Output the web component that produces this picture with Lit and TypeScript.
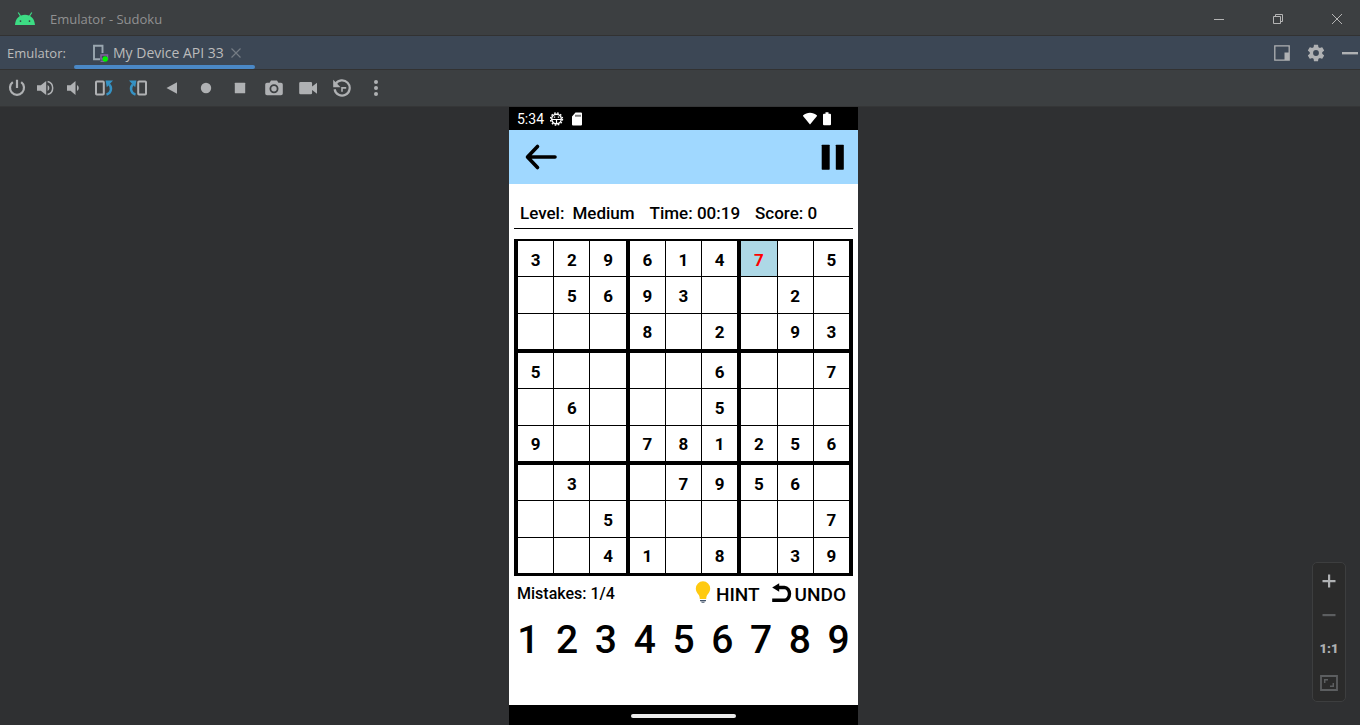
import { LitElement, html, css, svg } from "lit";
import { customElement, state } from "lit/decorators.js";

const BOARD = [
  "329614705",
  "056930020",
  "000802093",
  "500006007",
  "060005000",
  "900781256",
  "030079560",
  "005000007",
  "004108039",
];

const power = svg`<path d="M9 .8V9M4.800 3.200A7 7 0 1 0 13.200 3.200" fill="none" stroke="currentColor" stroke-width="2.200"/>`;
const volumeUp = svg`<path d="M1 6.300h3.800L10.200 2v14l-5.400-4.300H1z"/><path d="M11.600 6a3.400 3.400 0 0 1 0 6z"/><path d="M11.600 2.500a6.700 6.700 0 0 1 0 13" fill="none" stroke="currentColor" stroke-width="1.500"/>`;
const volumeDown = svg`<path d="M3 6.300h3.500L11.500 2v14l-5-4.300H3z"/><path d="M13 6a3.400 3.400 0 0 1 0 6z"/>`;
const rotateLeft = svg`<rect x="1" y="2.500" width="7.800" height="13" rx=".8" fill="none" stroke="currentColor" stroke-width="2"/><path d="M11.500 15.600c5-1.600 5.800-7.200 2.600-10.200" fill="none" stroke="#3592c4" stroke-width="2.400"/><path d="M10.600 1.500h7.400l-6.200 6.800z" fill="#3592c4"/>`;
const rotateRight = svg`<rect x="9.200" y="2.500" width="7.800" height="13" rx=".8" fill="none" stroke="currentColor" stroke-width="2"/><path d="M6.500 15.600C1.500 14 .7 8.400 3.900 5.400" fill="none" stroke="#3592c4" stroke-width="2.400"/><path d="M7.400 1.500H0l6.200 6.800z" fill="#3592c4"/>`;
const back = svg`<path d="M3.500 9 14 3.200v11.600z"/>`;
const home = svg`<circle cx="9" cy="9" r="5.200"/>`;
const overview = svg`<rect x="3.800" y="3.800" width="10.400" height="10.400" rx=".5"/>`;
const camera = svg`<path fill-rule="evenodd" d="M6 1.500h6l1.400 2.200H16a1.800 1.800 0 0 1 1.800 1.800v9A1.800 1.800 0 0 1 16 16.300H2A1.800 1.800 0 0 1 .2 14.500v-9A1.800 1.800 0 0 1 2 3.700h2.600zM9 5.300a4.500 4.500 0 1 0 0 9 4.500 4.500 0 0 0 0-9z"/><circle cx="9" cy="9.800" r="2.700"/>`;
const video = svg`<path d="M1.500 3h10.300a1.300 1.300 0 0 1 1.300 1.300v3.200L18 3.700v11l-4.900-3.800v3a1.300 1.300 0 0 1-1.300 1.300H1.500a1.300 1.300 0 0 1-1.300-1.300V4.300A1.300 1.300 0 0 1 1.500 3z"/>`;
const history = svg`<path d="M2.500 5.200A7.600 7.600 0 1 1 1.600 10.300" fill="none" stroke="currentColor" stroke-width="2.200"/><path d="M.2.800v7.400h7.400z"/><path d="M9 12.800V8.900h4.200" fill="none" stroke="currentColor" stroke-width="1.600"/>`;
const more = svg`<circle cx="9" cy="3" r="2"/><circle cx="9" cy="9" r="2"/><circle cx="9" cy="15" r="2"/>`;

const TOOLS: Array<[string, unknown, boolean]> = [
  ["Power", power, true],
  ["Volume up", volumeUp, true],
  ["Volume down", volumeDown, true],
  ["Rotate left", rotateLeft, false],
  ["Rotate right", rotateRight, false],
  ["Back", back, false],
  ["Home", home, false],
  ["Overview", overview, false],
  ["Take screenshot", camera, false],
  ["Record screen", video, false],
  ["Snapshots", history, false],
  ["More", more, false],
];

const resetButton = css`
  button {
    appearance: none;
    border: 0;
    margin: 0;
    padding: 0;
    background: none;
    color: inherit;
    font: inherit;
    display: flex;
    align-items: center;
    justify-content: center;
    cursor: pointer;
  }
  svg {
    display: block;
    fill: currentColor;
    flex: none;
  }
  .line {
    fill: none;
  }
`;

@customElement("sudoku-board")
class SudokuBoard extends LitElement {
  @state() private selected = "0-6";

  static styles = [
    resetButton,
    css`
      :host {
        display: block;
      }
      .board {
        display: grid;
        grid-template-columns: repeat(3, 1fr);
        grid-auto-rows: 108px;
        gap: 4px;
        padding: 2px 4px 3px;
        background: #000;
      }
      .block {
        display: grid;
        grid-template-columns: repeat(3, 1fr);
        grid-template-rows: repeat(3, 1fr);
        gap: 1px;
      }
      .board .cell {
        padding-top: 2px;
        background: #fff;
        font-size: 17px;
        line-height: 20px;
        font-weight: 700;
      }
      .board .selected {
        background: #add8e6;
      }
      .board .wrong {
        color: #f00;
      }
    `,
  ];

  render() {
    const n = [0, 1, 2];
    return html`<div class="board">
      ${n.map((br) =>
        n.map(
          (bc) => html`<div class="block">
            ${n.map((r) =>
              n.map((c) => {
                const row = br * 3 + r;
                const col = bc * 3 + c;
                const key = `${row}-${col}`;
                const value = BOARD[row][col];
                const cls = `cell${key === this.selected ? " selected" : ""}${key === "0-6" ? " wrong" : ""}`;
                return html`<button
                  class=${cls}
                  aria-label=${`Row ${row + 1}, column ${col + 1}`}
                  @click=${() => (this.selected = key)}
                >${value === "0" ? "" : value}</button>`;
              })
            )}
          </div>`
        )
      )}
    </div>`;
  }
}

@customElement("device-screen")
class DeviceScreen extends LitElement {
  static styles = [
    resetButton,
    css`
      :host {
        display: flex;
        flex-direction: column;
        width: 349px;
        background: #fff;
        color: #000;
        font-family: Roboto, sans-serif;
      }
      .status {
        display: flex;
        align-items: center;
        gap: 6px;
        height: 23px;
        padding: 0 27px 0 8px;
        background: #000;
        color: #fff;
        font-size: 14px;
      }
      .spacer {
        flex: 1;
      }
      .header {
        display: flex;
        align-items: center;
        justify-content: space-between;
        height: 54px;
        padding: 0 13px 0 16px;
        background: #a0d8ff;
      }
      .game {
        flex: 1;
        padding: 19px 5px 0;
      }
      .info {
        display: flex;
        gap: 15px;
        padding: 0 6px 5px;
        border-bottom: 1px solid #000;
        margin-bottom: 10px;
        font-size: 17px;
        line-height: 20px;
        font-weight: 500;
        white-space: nowrap;
      }
      .level {
        display: flex;
        gap: 8px;
      }
      .actions {
        display: flex;
        align-items: flex-start;
        padding: 5px 7px 0 3px;
        white-space: nowrap;
      }
      .mistakes {
        flex: 1;
        font-size: 16px;
        line-height: 26px;
        font-weight: 500;
      }
      .actions button {
        font-size: 19px;
        line-height: 28px;
        font-weight: 500;
      }
      .actions .hint {
        gap: 5px;
        align-items: flex-start;
      }
      .actions .undo {
        margin-left: 12px;
        gap: 3px;
      }
      .pad {
        display: grid;
        grid-template-columns: repeat(9, 1fr);
        margin: 7px -5px 0;
        font-size: 39px;
        line-height: 48px;
        font-weight: 500;
      }
      .nav {
        display: flex;
        justify-content: center;
        align-items: center;
        height: 20px;
        padding-top: 2px;
        box-sizing: border-box;
        background: #000;
      }
      .handle {
        width: 105px;
        height: 4px;
        border-radius: 2px;
        background: #ececec;
      }
    `,
  ];

  render() {
    return html`
      <div class="status">
        <span>5:34</span>
        <svg width="14" height="14" viewBox="0 0 14 14" stroke="currentColor">
          <circle class="line" cx="6.500" cy="7" r="4.800" stroke-width="1.400"></circle>
          <circle class="line" cx="6.500" cy="7" r="6" stroke-width="1.400" stroke-dasharray="1.600 1.540"></circle>
          <path class="line" d="M2 7.500h9M6.500 7.500v4.500M3.800 5.200h1.400M7.800 5.200h1.400" stroke-width="1.200"></path>
        </svg>
        <svg width="14" height="14" viewBox="0 0 14 14">
          <path fill-rule="evenodd" d="M5.500.500H11a1 1 0 0 1 1 1v11a1 1 0 0 1-1 1H3a1 1 0 0 1-1-1V4.500zM5.500 2.700v2h1v-2zM7.500 2.700v2h1v-2zM9.500 2.700v2h1v-2z"></path>
        </svg>
        <span class="spacer"></span>
        <svg width="14" height="14" viewBox="0 0 14 14">
          <path d="M-.2 3.700C4-.2 10-.2 14.200 3.700L7 12.500z"></path>
        </svg>
        <svg width="8" height="14" viewBox="0 0 8 14">
          <path d="M2.500.200h3v1.500H7a1 1 0 0 1 1 1v9.500a1 1 0 0 1-1 1H1a1 1 0 0 1-1-1V2.700a1 1 0 0 1 1-1h1.500z"></path>
        </svg>
      </div>
      <div class="header">
        <button aria-label="Back">
          <svg width="33" height="28" viewBox="0 0 33 28">
            <path class="line" d="M12.500 3.500 2.500 14l10 10.500M3 14h27" stroke="#000" stroke-width="3.600" stroke-linecap="round" stroke-linejoin="round"></path>
          </svg>
        </button>
        <button aria-label="Pause">
          <svg width="24" height="26" viewBox="0 0 24 26">
            <rect x=".7" y=".7" width="8" height="25" rx=".6"></rect>
            <rect x="14.800" y=".7" width="8" height="25" rx=".6"></rect>
          </svg>
        </button>
      </div>
      <div class="game">
        <div class="info">
          <span class="level"><span>Level:</span><span>Medium</span></span>
          <span>Time: 00:19</span>
          <span>Score: 0</span>
        </div>
        <sudoku-board></sudoku-board>
        <div class="actions">
          <span class="mistakes">Mistakes: 1/4</span>
          <button class="hint">
            <svg width="16" height="24" viewBox="0 0 16 24">
              <path fill="#ffca10" d="M8 .3A7.200 7.200 0 0 0 .8 7.500c0 2.600 1.200 4.300 2.600 5.900.8 1 1.300 2.200 1.400 4.600h6.400c.1-2.400.6-3.600 1.400-4.600 1.400-1.600 2.600-3.300 2.600-5.900A7.200 7.200 0 0 0 8 .3z"></path>
              <path fill="#44556b" d="M5 19h6v1.200H5zM6 20.800h4l-.8 1H6.800z"></path>
            </svg>
            <span>HINT</span>
          </button>
          <button class="undo">
            <svg width="20" height="24" viewBox="0 0 20 24">
              <path class="line" d="M4 4.500h8.500a5 6.350 0 0 1 0 12.700H.2" stroke="#000" stroke-width="3.400"></path>
              <path d="M.2 4.500 7.200.2v8.600z"></path>
            </svg>
            <span>UNDO</span>
          </button>
        </div>
        <div class="pad">
          ${[1, 2, 3, 4, 5, 6, 7, 8, 9].map((d) => html`<button>${d}</button>`)}
        </div>
      </div>
      <div class="nav"><div class="handle"></div></div>
    `;
  }
}

@customElement("app-root")
class AppRoot extends LitElement {
  static styles = [
    resetButton,
    css`
      :host {
        display: flex;
        flex-direction: column;
        height: 100vh;
        overflow: hidden;
        background: #2f3032;
        color: #bbbbbb;
        font-family: "Open Sans", sans-serif;
        font-size: 13px;
        line-height: 18px;
      }
      .titlebar {
        display: flex;
        align-items: center;
        height: 35px;
        padding: 2px 18px 0 15px;
        box-sizing: border-box;
        background: #3c3f41;
        color: #919191;
      }
      .title {
        flex: 1;
        margin-left: 15px;
      }
      .window {
        display: flex;
        gap: 49px;
        color: #b4b4b4;
      }
      .tabs {
        display: flex;
        align-items: stretch;
        height: 33px;
        border-top: 1px solid #323232;
        border-bottom: 1px solid #323232;
        background: #3c4755;
        padding-left: 7px;
      }
      .caption {
        align-self: center;
        width: 67px;
      }
      .tab {
        display: flex;
        flex-direction: column;
        width: 181px;
      }
      .tab-content {
        display: flex;
        align-items: center;
        flex: 1;
        padding: 4px 0 0 18px;
      }
      .tab::after {
        content: "";
        height: 4px;
        border-radius: 2px;
        background: #4a88c7;
      }
      .name {
        margin: 0 7px 0 3px;
        font-size: 14px;
      }
      .tab .close {
        color: #747c84;
      }
      .panel {
        display: flex;
        align-items: center;
        gap: 14px;
        margin-left: auto;
        color: #afb1b3;
      }
      .toolbar {
        display: flex;
        align-items: center;
        height: 36px;
        padding-left: 3px;
        background: #3c3f41;
        border-bottom: 1px solid #353637;
        color: #afb1b3;
      }
      .tool {
        width: 34px;
        height: 30px;
      }
      .toolbar .narrow {
        width: 28px;
      }
      .canvas {
        position: relative;
        flex: 1;
        display: flex;
        justify-content: center;
        padding-left: 7px;
        min-height: 0;
      }
      .zoom {
        position: absolute;
        right: 14px;
        bottom: 23px;
        display: grid;
        grid-auto-rows: 34px;
        width: 32px;
        padding: 1px 0;
        border: 1px solid #3d3e3f;
        border-radius: 5px;
        background: #2b2b2b;
        color: #afb1b3;
        font-family: Roboto, sans-serif;
        font-size: 13px;
        font-weight: 900;
      }
      .zoom .off {
        color: #5c5e60;
      }
    `,
  ];

  render() {
    return html`
      <header class="titlebar">
        <svg width="20" height="13" viewBox="0 0 20 13">
          <path d="M3.200.5 5.500 4M16.800.5 14.500 4" stroke="#3ddc84" stroke-width="1.200"></path>
          <path fill="#3ddc84" fill-rule="evenodd" d="M0 13C.4 6.500 4.500 2.800 10 2.800S19.600 6.500 20 13zM5.500 8.200a.9.9 0 1 0 0 1.800.9.9 0 0 0 0-1.800zm9 0a.9.9 0 1 0 0 1.800.9.9 0 0 0 0-1.800z"></path>
        </svg>
        <span class="title">Emulator - Sudoku</span>
        <div class="window">
          <button aria-label="Minimize">
            <svg width="10" height="10" viewBox="0 0 10 10"><path d="M0 5h10v1H0z"></path></svg>
          </button>
          <button aria-label="Restore">
            <svg width="10" height="10" viewBox="0 0 10 10">
              <path class="line" d="M.5 2.500h7v7h-7zM2.500 2.500v-2h7v7h-2" stroke="currentColor"></path>
            </svg>
          </button>
          <button aria-label="Close">
            <svg width="10" height="10" viewBox="0 0 10 10"><path d="M0 0l10 10M10 0 0 10" stroke="currentColor"></path></svg>
          </button>
        </div>
      </header>
      <nav class="tabs">
        <span class="caption">Emulator:</span>
        <div class="tab">
          <div class="tab-content">
            <svg width="18" height="18" viewBox="0 0 18 18">
              <path class="line" d="M8 15.200H2V1.700h8.500V9" stroke="#9aa7b0" stroke-width="1.900"></path>
              <path class="line" d="M9 11h6.500v4H9zM8.500 17.200h4" stroke="#8264a0" stroke-width="1.500"></path>
              <circle cx="13.200" cy="15" r="2.700" fill="#00f200"></circle>
            </svg>
            <span class="name">My Device API 33</span>
            <button class="close" aria-label="Close tab">
              <svg width="10" height="10" viewBox="0 0 10 10"><path d="M.5.500l9 9M9.500.500l-9 9" stroke="currentColor" stroke-width="1.200"></path></svg>
            </button>
          </div>
        </div>
        <div class="panel">
          <button aria-label="Window mode">
            <svg width="20" height="20" viewBox="0 0 20 20">
              <path class="line" d="M2.800 2.800h14.400v14.400H2.800z" stroke="currentColor" stroke-width="1.300"></path>
              <path d="M12.500 9.500H17V17h-4.500z"></path>
            </svg>
          </button>
          <button aria-label="Settings">
            <svg width="20" height="20" viewBox="0 0 24 24">
              <path d="M19.430 12.980c.04-.32.07-.64.07-.98s-.03-.66-.07-.98l2.110-1.650c.19-.15.24-.42.12-.64l-2-3.460c-.12-.22-.39-.3-.61-.22l-2.490 1c-.52-.4-1.080-.73-1.690-.98l-.38-2.650A.488.488 0 0 0 14 2h-4c-.25 0-.46.18-.49.42l-.38 2.650c-.61.25-1.170.59-1.690.98l-2.490-1c-.23-.09-.49 0-.61.22l-2 3.460c-.13.22-.07.49.12.64l2.110 1.650c-.04.32-.07.65-.07.98s.03.66.07.98l-2.110 1.650c-.19.15-.24.42-.12.64l2 3.460c.12.22.39.3.61.22l2.490-1c.52.4 1.080.73 1.690.98l.38 2.650c.03.24.24.42.49.42h4c.25 0 .46-.18.49-.42l.38-2.650c.61-.25 1.170-.59 1.690-.98l2.490 1c.23.09.49 0 .61-.22l2-3.460c.12-.22.07-.49-.12-.64zM12 15.500a3.500 3.500 0 1 1 0-7 3.500 3.500 0 0 1 0 7z"></path>
            </svg>
          </button>
          <button aria-label="Hide">
            <svg width="20" height="20" viewBox="0 0 20 20"><rect x="2" y="9" width="16" height="2.400"></rect></svg>
          </button>
        </div>
      </nav>
      <div class="toolbar" role="toolbar">
        ${TOOLS.map(
          ([label, icon, narrow]) => html`<button class="tool ${narrow ? "narrow" : ""}" aria-label=${label}>
            <svg width="18" height="18" viewBox="0 0 18 18">${icon}</svg>
          </button>`
        )}
      </div>
      <main class="canvas">
        <device-screen></device-screen>
        <div class="zoom">
          <button aria-label="Zoom in">
            <svg width="14" height="14" viewBox="0 0 14 14"><path d="M6 .5h2.200V6h5.300v2.200H8.200v5.300H6V8.200H.5V6H6z"></path></svg>
          </button>
          <button class="off" aria-label="Zoom out">
            <svg width="14" height="14" viewBox="0 0 14 14"><path d="M.5 6h13v2.200H.5z"></path></svg>
          </button>
          <button>1:1</button>
          <button class="off" aria-label="Zoom to fit">
            <svg width="18" height="16" viewBox="0 0 18 16">
              <path class="line" d="M1 1h16v14H1z" stroke="currentColor" stroke-width="1.800"></path>
              <path class="line" d="M4.700 8V4.700H8M13.300 8v3.300H10" stroke="currentColor" stroke-width="1.500"></path>
            </svg>
          </button>
        </div>
      </main>
    `;
  }
}
